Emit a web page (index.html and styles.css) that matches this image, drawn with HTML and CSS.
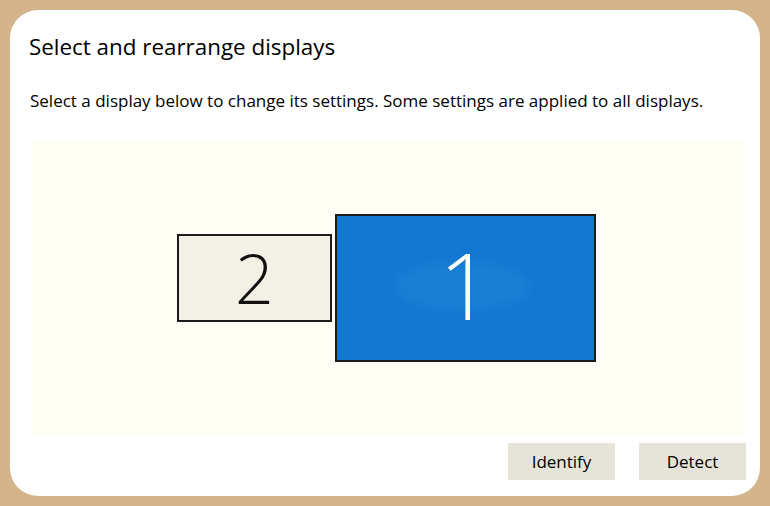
FILE: index.html
```html
<!DOCTYPE html>
<html>
<head>
<meta charset="utf-8">
<link rel="stylesheet" href="styles.css">
</head>
<body>
<div class="card">
  <h1 class="title">Select and rearrange displays</h1>
  <p class="desc">Select a display below to change its settings. Some settings are applied to all displays.</p>
  <div class="canvas">
    <div class="display secondary"><span class="num">2</span></div>
    <div class="display primary"><span class="glow"></span><span class="num">1</span></div>
  </div>
  <div class="actions">
    <button class="btn">Identify</button>
    <button class="btn">Detect</button>
  </div>
</div>
</body>
</html>
```
FILE: styles.css
```css
html, body {
  margin: 0;
  padding: 0;
  background: #d3b48b;
}
body {
  width: 770px;
  height: 506px;
  padding: 10px;
  box-sizing: border-box;
  font-family: "Open Sans", "Noto Sans", sans-serif;
  color: #000;
}
.card {
  width: 750px;
  height: 486px;
  background: #ffffff;
  border-radius: 28px;
  box-sizing: border-box;
  padding: 22px 14px 0 20px;
  display: flex;
  flex-direction: column;
}
.title {
  margin: 0 0 0 -1px;
  font-size: 22.4px;
  font-weight: 400;
  line-height: 30px;
}
.desc {
  margin: 27px 0 0 0;
  font-size: 17px;
  line-height: 24px;
}
.canvas {
  position: relative;
  margin: 28px 0 0 2px;
  width: 713px;
  height: 294px;
  background: #fffdf4;
}
.display {
  position: absolute;
  box-sizing: border-box;
  border: 2px solid #1c1c1c;
  display: flex;
  align-items: center;
  justify-content: center;
}
.secondary {
  left: 145px;
  top: 93px;
  width: 155px;
  height: 88px;
  background: #f3f1e6;
}
.primary {
  left: 303px;
  top: 73px;
  width: 261px;
  height: 148px;
  background: #1478d3;
  overflow: hidden;
}
.glow {
  position: absolute;
  left: 58px;
  top: 46px;
  width: 134px;
  height: 48px;
  border-radius: 50%;
  background: #187fd4;
  filter: blur(5px);
}
.num {
  position: relative;
  font-family: "Open Sans", sans-serif;
  font-weight: 300;
  line-height: 1;
}
.secondary .num {
  font-size: 68px;
  color: #111;
}
.primary .num {
  font-size: 93px;
  color: #fff;
  margin-top: -8px;
}
.actions {
  display: flex;
  justify-content: flex-end;
  gap: 24px;
  margin-top: 8px;
}
.btn {
  width: 107px;
  height: 37px;
  border: none;
  background: #e6e4d9;
  font-family: "Open Sans", sans-serif;
  font-size: 17px;
  color: #000;
  padding: 0;
}
```
